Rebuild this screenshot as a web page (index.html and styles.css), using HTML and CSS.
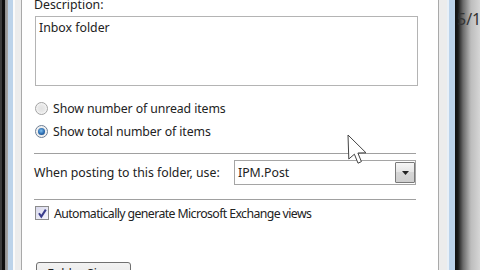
FILE: index.html
```html
<!DOCTYPE html>
<html>
<head>
<meta charset="utf-8">
<link rel="stylesheet" href="styles.css">
</head>
<body>
<div class="out-left"></div>
<div class="frame-left"></div>
<div class="face-left"></div>
<div class="panel">
  <div class="content">
    <div class="label">Description:</div>
    <div class="textbox">Inbox folder</div>
    <div class="radios">
      <div class="opt"><span class="radio"></span>Show number of unread items</div>
      <div class="opt"><span class="radio on"></span>Show total number of items</div>
    </div>
    <div class="sep"></div>
    <div class="post-row">
      <span class="post-label">When posting to this folder, use:</span>
      <div class="combo"><span class="combo-text">IPM.Post</span><span class="dd"><svg width="7" height="4" viewBox="0 0 7 4"><path d="M0 0H7L3.5 4Z" fill="#222"/></svg></span></div>
    </div>
    <div class="sep sep2"></div>
    <div class="check-row"><span class="checkbox"><svg width="11" height="11" viewBox="0 0 11 11"><path d="M2 5.2L4.3 8.6L8.8 1.6" fill="none" stroke="#3a3d8c" stroke-width="2"/></svg></span><span class="check-text">Automatically generate Microsoft Exchange views</span></div>
    <div class="button">Folder Size...</div>
  </div>
</div>
<div class="face-right"></div>
<div class="frame-right"></div>
<div class="out-right"><span class="bg-text">5/1</span></div>
<svg class="cursor" width="21" height="31" viewBox="0 0 21 31"><path d="M1 1L1.8 25L7.4 20.2L11 29.2L14.4 27.6L10.9 19L19 18.8Z" fill="#fff" stroke="#444" stroke-width="1" stroke-linejoin="round"/></svg>
</body>
</html>
```
FILE: styles.css
```css
html, body {
  margin: 0;
  padding: 0;
}
body {
  width: 480px;
  height: 270px;
  overflow: hidden;
  display: flex;
  position: relative;
  font-family: "Noto Sans", "Open Sans", sans-serif;
  font-size: 12.3px;
  color: #222;
  background: #f0f0f0;
}
.out-left {
  width: 8px;
  flex: none;
  background: linear-gradient(to right, #3c3c3c 0, #3c3c3c 2px, #0e0e0e 2px, #0e0e0e 5px, #8d8d8d 5px, #a9a9a9 8px);
}
.frame-left {
  width: 5px;
  flex: none;
  background: #bcd3ea;
}
.face-left {
  width: 8px;
  flex: none;
  background: linear-gradient(to right, #fafafa 0, #fafafa 2px, #ececec 2px);
}
.panel {
  width: 416px;
  flex: none;
  border-left: 1px solid #a9a9a9;
  border-right: 1px solid #a9a9a9;
  background: #fff;
}
.face-right {
  width: 8px;
  flex: none;
  background: #ececec;
}
.frame-right {
  width: 8px;
  flex: none;
  background: linear-gradient(to right, #e8f0f8 0, #e8f0f8 2px, #bcd3ea 2px);
}
.out-right {
  width: 25px;
  flex: none;
  background: linear-gradient(to right, #101010 0, #1a1a1a 3px, #6a6a6a 8px, #bdbdbd 16px, #d6d6d6 25px);
  padding: 11px 0 0 2px;
  box-sizing: border-box;
  overflow: hidden;
}
.bg-text {
  color: #333;
  font-size: 16px;
  line-height: 16px;
  white-space: nowrap;
}
.content {
  margin-top: -3px;
  padding: 0 20px 0 12px;
}
.label {
  line-height: 15px;
}
.textbox {
  margin: 4px 0 0 1px;
  width: 383px;
  height: 70px;
  box-sizing: border-box;
  border: 1px solid #b4b4b4;
  padding: 3px 3px;
  line-height: 15px;
}
.radios {
  margin-top: 11px;
  letter-spacing: -0.1px;
}
.opt {
  display: flex;
  align-items: center;
  height: 23px;
}
.radio {
  width: 13px;
  height: 13px;
  box-sizing: border-box;
  border-radius: 50%;
  border: 1px solid #a2a2a2;
  background: radial-gradient(circle, #e2e2e2 0, #e9e9e9 45%, #fafafa 80%);
  margin: 0 5px 0 1px;
  display: flex;
  align-items: center;
  justify-content: center;
}
.radio.on {
  border-color: #6d7e94;
}
.radio.on::after {
  content: "";
  width: 7px;
  height: 7px;
  border-radius: 50%;
  background: radial-gradient(circle at 45% 40%, #7fc0f0 0, #2a6bb0 55%, #163e6e 100%);
}
.sep {
  margin-top: 10px;
  width: 382px;
  height: 1px;
  background: #a0a0a0;
}
.post-row {
  margin-top: 6px;
  display: grid;
  grid-template-columns: 200px 182px;
  align-items: center;
  height: 25px;
}
.combo {
  height: 25px;
  box-sizing: border-box;
  border: 1px solid #a5a5a5;
  display: flex;
  align-items: center;
  justify-content: space-between;
  padding: 0 0 0 3px;
}
.dd {
  width: 20px;
  height: 21px;
  box-sizing: border-box;
  border: 1px solid #7a7a7a;
  border-radius: 1px;
  background: linear-gradient(#f6f6f6, #e4e4e4 50%, #d6d6d6 50%, #cfcfcf);
  display: flex;
  align-items: center;
  justify-content: center;
}
.sep2 {
  margin-top: 14px;
}
.check-row {
  margin-top: 6px;
  display: flex;
  align-items: center;
  height: 14px;
}
.check-text {
  letter-spacing: -0.6px;
  white-space: nowrap;
}
.checkbox {
  width: 14px;
  height: 14px;
  flex: none;
  box-sizing: border-box;
  border: 1px solid #8c8c8c;
  background: linear-gradient(135deg, #d8d8ec, #f6f6fc);
  margin: 0 5px 0 1px;
  display: flex;
  align-items: center;
  justify-content: center;
}
.button {
  margin: 42px 0 0 2px;
  width: 95px;
  height: 25px;
  box-sizing: border-box;
  border: 1px solid #707070;
  border-radius: 3px;
  background: linear-gradient(#f2f2f2, #ebebeb 50%, #dddddd 50%, #cfcfcf);
  text-align: center;
  line-height: 22px;
}
.cursor {
  position: absolute;
  left: 347px;
  top: 134px;
}
```
